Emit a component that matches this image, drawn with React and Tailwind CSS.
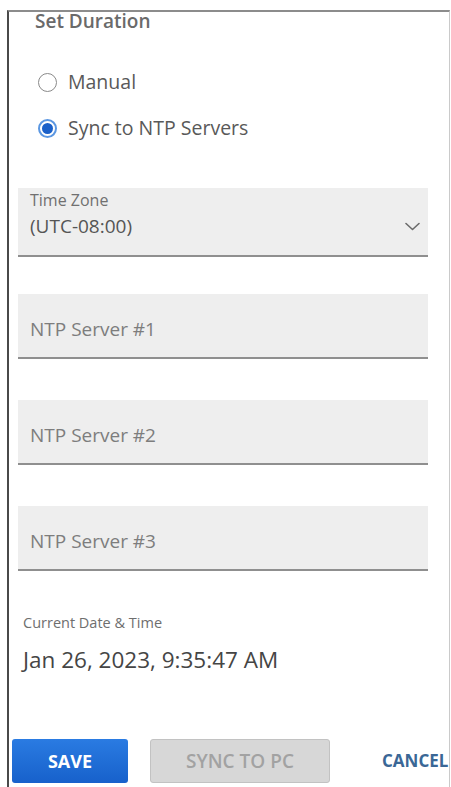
import React from 'react';

const Radio = ({ checked, label }) => (
  <label className="flex h-[28px] items-center">
    {checked ? (
      <span className="flex h-[19px] w-[19px] items-center justify-center rounded-full border-2 border-[#5b97e2]">
        <span className="h-[11px] w-[11px] rounded-full bg-[#1a60c9]" />
      </span>
    ) : (
      <span className="h-[19px] w-[19px] rounded-full border-[1.5px] border-[#8a8a8a]" />
    )}
    <span className="ml-[11px] text-[19.5px] leading-[24px] text-[#595959]">{label}</span>
  </label>
);

const NtpField = ({ placeholder, className }) => (
  <div className={`ml-[9px] h-[65px] w-[410px] border-b-2 border-[#8f8f8f] bg-[#eeeeee] pl-[12px] pt-[23px] ${className}`}>
    <span className="text-[19px] leading-[24px] text-[#7d7d7d]">{placeholder}</span>
  </div>
);

const App = () => {
  return (
    <div className="h-[787px] w-[451px] overflow-hidden bg-white font-['Open_Sans',sans-serif]">
      <div className="ml-[7px] mt-[10px] flex h-[777px] w-[443px] flex-col border-l-2 border-r border-t-2 border-l-[#4a4a4a] border-r-[#cacaca] border-t-[#8c8c8c]">
        {/* duration */}
        <div className="-mt-[3px] ml-[26px] text-[19px] font-semibold leading-[24px] text-[#6a6a6a]">
          Set Duration
        </div>
        <div className="ml-[29px] mt-[35px]">
          <Radio label="Manual" />
        </div>
        <div className="ml-[29px] mt-[18px]">
          <Radio checked label="Sync to NTP Servers" />
        </div>

        {/* time zone */}
        <div className="ml-[9px] mt-[46px] h-[69px] w-[410px] border-b-2 border-[#8f8f8f] bg-[#eeeeee] pl-[12px] pr-[8px] pt-[3px]">
          <div className="text-[16px] leading-[18px] text-[#707070]">Time Zone</div>
          <div className="mt-[5px] flex items-center justify-between">
            <span className="text-[19px] leading-[24px] text-[#555555]">(UTC-08:00)</span>
            <svg width="15" height="9" viewBox="0 0 15 9" fill="none">
              <path d="M1 1.5l6.5 6 6.5-6" stroke="#6b6b6b" strokeWidth="1.6" strokeLinecap="round" strokeLinejoin="round" />
            </svg>
          </div>
        </div>

        <NtpField placeholder="NTP Server #1" className="mt-[37px]" />
        <NtpField placeholder="NTP Server #2" className="mt-[41px]" />
        <NtpField placeholder="NTP Server #3" className="mt-[41px]" />

        {/* current time */}
        <div className="ml-[14px] mt-[43px] text-[14.5px] leading-[18px] text-[#6e6e6e]">Current Date &amp; Time</div>
        <div className="ml-[14px] mt-[14px] text-[22.5px] leading-[28px] text-[#454545]">Jan 26, 2023, 9:35:47 AM</div>

        {/* actions */}
        <div className="ml-[3px] mt-[65px] flex items-center">
          <button className="h-[44px] w-[116px] rounded-[3px] bg-linear-to-b from-[#2a7be2] to-[#1761cb] text-[18px] font-bold text-white">
            SAVE
          </button>
          <button className="ml-[22px] h-[44px] w-[180px] rounded-[3px] border border-[#c2c2c2] bg-[#d7d7d7] text-[19px] font-semibold text-[#a2a2a2]">
            SYNC TO PC
          </button>
          <button className="ml-[52px] text-[17px] font-bold text-[#3a6796]">CANCEL</button>
        </div>
      </div>
    </div>
  );
};

export default App;
